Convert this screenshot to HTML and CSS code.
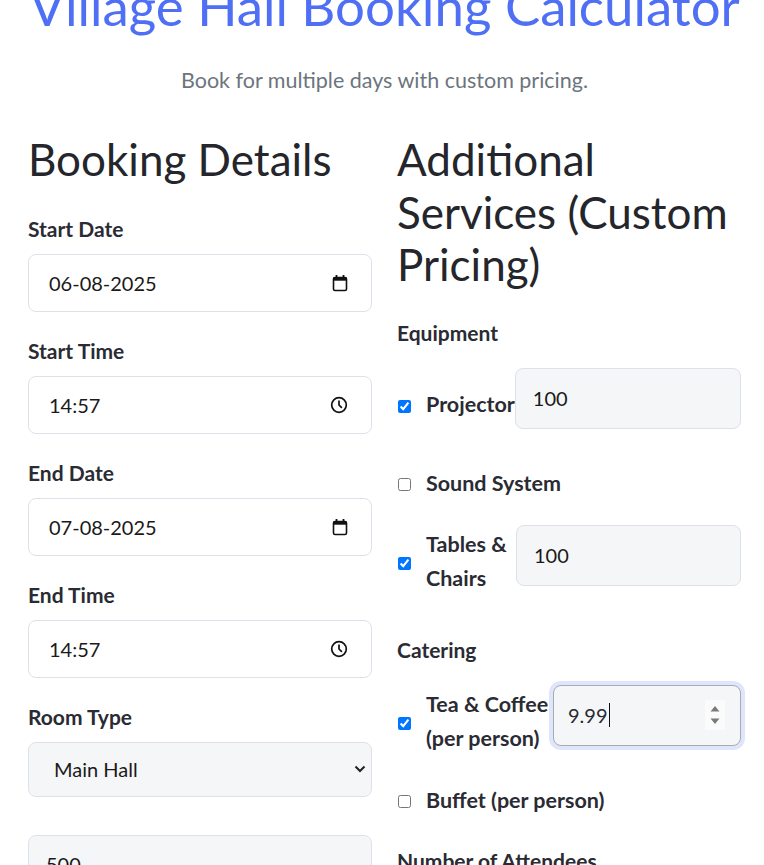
FILE: index.html
```html
<!DOCTYPE html>
<html lang="en">
<head>
<meta charset="utf-8">
<title>Village Hall Booking Calculator</title>
<link rel="stylesheet" href="styles.css">
</head>
<body>
<div class="page">
  <header class="hero">
    <h1 class="title">Village Hall Booking Calculator</h1>
    <p class="lead">Book for multiple days with custom pricing.</p>
  </header>

  <div class="columns">
    <section class="col">
      <h2 class="section-title">Booking Details</h2>

      <div class="group">
        <label class="label">Start Date</label>
        <div class="field-wrap">
          <input class="field" type="text" value="06-08-2025" readonly>
          <svg class="icon icon-cal" width="16" height="18" viewBox="0 0 16 18"><rect x="1.5" y="3.5" width="13" height="13" rx="1.5" fill="none" stroke="#111" stroke-width="1.6"/><rect x="1.5" y="3.5" width="13" height="3.2" fill="#111"/><rect x="3.6" y="1" width="1.8" height="3" fill="#111"/><rect x="10.6" y="1" width="1.8" height="3" fill="#111"/></svg>
        </div>
      </div>

      <div class="group">
        <label class="label">Start Time</label>
        <div class="field-wrap">
          <input class="field" type="text" value="14:57" readonly>
          <svg class="icon icon-clock" width="18" height="18" viewBox="0 0 18 18"><circle cx="9" cy="9" r="7.3" fill="none" stroke="#111" stroke-width="1.7"/><path d="M9 4.6V9l2.9 2.9" fill="none" stroke="#111" stroke-width="1.7"/></svg>
        </div>
      </div>

      <div class="group">
        <label class="label">End Date</label>
        <div class="field-wrap">
          <input class="field" type="text" value="07-08-2025" readonly>
          <svg class="icon icon-cal" width="16" height="18" viewBox="0 0 16 18"><rect x="1.5" y="3.5" width="13" height="13" rx="1.5" fill="none" stroke="#111" stroke-width="1.6"/><rect x="1.5" y="3.5" width="13" height="3.2" fill="#111"/><rect x="3.6" y="1" width="1.8" height="3" fill="#111"/><rect x="10.6" y="1" width="1.8" height="3" fill="#111"/></svg>
        </div>
      </div>

      <div class="group">
        <label class="label">End Time</label>
        <div class="field-wrap">
          <input class="field" type="text" value="14:57" readonly>
          <svg class="icon icon-clock" width="18" height="18" viewBox="0 0 18 18"><circle cx="9" cy="9" r="7.3" fill="none" stroke="#111" stroke-width="1.7"/><path d="M9 4.6V9l2.9 2.9" fill="none" stroke="#111" stroke-width="1.7"/></svg>
        </div>
      </div>

      <div class="group group-select">
        <label class="label">Room Type</label>
        <div class="field-wrap">
          <select class="field field-select"><option>Main Hall</option></select>
          <svg class="icon icon-chevron" width="12" height="8" viewBox="0 0 12 8"><path d="M1.5 1.5L6 6l4.5-4.5" fill="none" stroke="#222" stroke-width="2"/></svg>
        </div>
      </div>

      <div class="group">
        <input class="field field-gray" type="text" value="500" readonly>
      </div>
    </section>

    <section class="col">
      <h2 class="section-title">Additional Services (Custom Pricing)</h2>

      <div class="subhead">Equipment</div>
      <div class="service">
        <input class="check" type="checkbox" checked>
        <label class="service-label">Projector</label>
        <input class="field field-gray service-input" type="text" value="100" readonly>
      </div>
      <div class="service">
        <input class="check" type="checkbox">
        <label class="service-label">Sound System</label>
      </div>
      <div class="service">
        <input class="check" type="checkbox" checked>
        <label class="service-label">Tables &amp; Chairs</label>
        <input class="field field-gray service-input" type="text" value="100" readonly>
      </div>

      <div class="subhead subhead-spaced">Catering</div>
      <div class="service">
        <input class="check" type="checkbox" checked>
        <label class="service-label">Tea &amp; Coffee (per person)</label>
        <div class="field field-gray service-input service-input-narrow field-focus">
          <span class="value">9.99</span><span class="caret"></span>
          <svg class="spinner" width="20" height="30" viewBox="0 0 20 30"><rect width="20" height="30" fill="#fbfbfb"/><path d="M5.5 11.5L10 6l4.5 5.5z" fill="#7a7a7a"/><path d="M5.5 18.5h9L10 24z" fill="#7a7a7a"/></svg>
        </div>
      </div>
      <div class="service">
        <input class="check" type="checkbox">
        <label class="service-label">Buffet (per person)</label>
      </div>

      <div class="subhead subhead-last">Number of Attendees</div>
    </section>
  </div>
</div>
</body>
</html>
```

FILE: styles.css
```css
* { box-sizing: border-box; }

html, body { margin: 0; padding: 0; background: #fff; }

body {
  font-family: "Lato", "Noto Sans", sans-serif;
  color: #212529;
  font-size: 20px;
  line-height: 1.5;
  overflow: hidden;
}

.page {
  margin-top: -26px;
  padding: 0 23px 0 28px;
}

.hero {
  text-align: center;
  margin: 0 -20px;
}

.title {
  margin: 0;
  font-size: 52.8px;
  font-weight: 400;
  line-height: 1.2;
  white-space: nowrap;
  color: #4f6ff5;
}

.lead {
  margin: 27px 0 0;
  font-size: 21.5px;
  line-height: 32px;
  color: #6c757d;
  font-weight: 400;
}

.columns {
  display: grid;
  grid-template-columns: minmax(0, 1fr) minmax(0, 1fr);
  column-gap: 25px;
  margin-top: 37px;
}

.col { min-width: 0; }

.section-title {
  margin: 0 0 28px;
  font-size: 44px;
  font-weight: 400;
  line-height: 52.5px;
  color: #24262b;
}

.group { margin-bottom: 24px; }
.group-select { margin-bottom: 38px; }

.label {
  display: block;
  font-weight: 700;
  font-size: 21px;
  line-height: 30px;
  margin-bottom: 10px;
  color: #2a2b33;
}

.field-wrap { position: relative; }

.field {
  display: block;
  width: 100%;
  height: 58px;
  padding: 13px 20px;
  font: inherit;
  font-size: 20px;
  line-height: 30px;
  color: #1a1a1a;
  background: #fff;
  border: 1px solid #dfe1ea;
  border-radius: 8px;
  outline: none;
}

.field-select {
  height: 55px;
  padding: 11px 40px 11px 25px;
  appearance: none;
  -webkit-appearance: none;
  background: #f5f6f8;
}

.field-gray {
  background: #f5f6f8;
  padding-left: 17px;
}

.icon {
  position: absolute;
  top: 50%;
  transform: translateY(-50%);
  pointer-events: none;
}
.icon-cal { right: 24px; }
.icon-clock { right: 24px; }
.icon-chevron { right: 6px; }

.subhead {
  font-weight: 700;
  font-size: 21px;
  line-height: 30px;
  margin: 0 0 20px;
  color: #2a2b33;
}
.section-title + .subhead { margin-top: -1px; }
.subhead-spaced { margin-top: 37px; }
.subhead-last { margin-top: 29px; }

.service {
  display: flex;
  align-items: center;
  margin-bottom: 25px;
}

.check {
  flex: none;
  width: 13px;
  height: 13px;
  margin: 4px 15px 0 1px;
  accent-color: #0075ff;
}

.service-label {
  flex: 0 1 auto;
  font-weight: 700;
  font-size: 21.5px;
  line-height: 34px;
  color: #2a2b33;
}

.service-input {
  flex: 1 1 auto;
  width: auto;
  min-width: 225px;
  height: 61px;
  margin-bottom: 12px;
}

.service-input-narrow { min-width: 188px; }

.field-focus {
  position: relative;
  display: flex;
  align-items: center;
  padding-left: 14px;
  border-color: #a9abb3;
  box-shadow: 0 0 0 4px #dfe5fc;
  color: #2a2b33;
}

.value { line-height: 30px; }

.caret {
  display: inline-block;
  width: 1px;
  height: 24px;
  background: #111;
  margin-left: 1px;
}

.spinner {
  position: absolute;
  right: 15px;
  top: 50%;
  transform: translateY(-50%);
}
```
